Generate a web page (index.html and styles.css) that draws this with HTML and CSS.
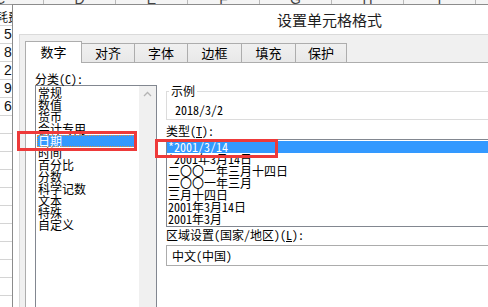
FILE: index.html
```html
<!DOCTYPE html>
<html lang="zh-CN">
<head>
<meta charset="utf-8">
<title>设置单元格格式</title>
<link rel="stylesheet" href="styles.css">
</head>
<body>
<div class="screen">
  <div class="sheet">
    <div class="col-head">
      <div class="ch ch-c">C</div>
      <div class="ch">D</div>
      <div class="ch">E</div>
      <div class="ch">F</div>
      <div class="ch">G</div>
      <div class="ch">H</div>
      <div class="ch">I</div>
    </div>
    <div class="rows">
      <div class="row row-cjk"><span class="clip-text">耗费</span></div>
      <div class="row">5</div>
      <div class="row">8</div>
      <div class="row">2</div>
      <div class="row">9</div>
      <div class="row">6</div>
      <div class="row"></div>
      <div class="row"></div>
      <div class="row"></div>
      <div class="row"></div>
      <div class="row"></div>
      <div class="row"></div>
      <div class="row"></div>
      <div class="row"></div>
      <div class="row"></div>
      <div class="row"></div>
      <div class="row"></div>
    </div>
  </div>

  <div class="dialog">
    <div class="titlebar">设置单元格格式</div>
    <div class="body">
      <div class="tabs">
        <div class="tab active">数字</div>
        <div class="tab w53">对齐</div>
        <div class="tab w53">字体</div>
        <div class="tab w54">边框</div>
        <div class="tab w54">填充</div>
        <div class="tab w51">保护</div>
      </div>
      <div class="panel">
        <div class="col-left">
          <div class="label label-cat">分类(C):</div>
          <div class="listbox cat">
            <ul class="items">
              <li>常规</li>
              <li>数值</li>
              <li>货币</li>
              <li>会计专用</li>
              <li class="sel focus">日期</li>
              <li>时间</li>
              <li>百分比</li>
              <li>分数</li>
              <li>科学记数</li>
              <li>文本</li>
              <li>特殊</li>
              <li>自定义</li>
            </ul>
            <div class="vscroll">
              <svg class="arrow" width="17" height="17" viewBox="0 0 17 17"><polyline points="5,10 8.5,6.5 12,10" fill="none" stroke="#b4b4b4" stroke-width="1.3"/></svg>
              <svg class="arrow" width="17" height="17" viewBox="0 0 17 17"><polyline points="5,7 8.5,10.5 12,7" fill="none" stroke="#b4b4b4" stroke-width="1.3"/></svg>
            </div>
          </div>
        </div>
        <div class="col-right">
          <fieldset class="sample">
            <legend>示例</legend>
            <div class="sample-val">2018/3/2</div>
          </fieldset>
          <div class="label label-type">类型(<u>T</u>):</div>
          <ul class="listbox types">
            <li class="sel">*2001/3/14</li>
            <li>*2001年3月14日</li>
            <li>二〇〇一年三月十四日</li>
            <li>二〇〇一年三月</li>
            <li>三月十四日</li>
            <li>2001年3月14日</li>
            <li>2001年3月</li>
          </ul>
          <div class="label label-locale">区域设置(国家/地区)(<u>L</u>):</div>
          <div class="combo">中文(中国)</div>
        </div>
      </div>
    </div>
  </div>

  <div class="mark mark-cat"></div>
  <div class="mark mark-type"></div>
</div>
</body>
</html>
```

FILE: styles.css
```css
html, body {
  margin: 0;
  padding: 0;
  background: #fff;
}

.screen {
  position: relative;
  width: 488px;
  height: 307px;
  overflow: hidden;
  background: #fff;
  font-family: "Noto Sans Mono CJK SC", "Noto Sans CJK SC", sans-serif;
  color: #000;
}

/* ---------- spreadsheet behind ---------- */
.col-head {
  display: flex;
  height: 4px;
  border-bottom: 1px solid #9a9a9a;
  background: #f4f4f4;
  overflow: hidden;
}

.ch {
  flex: 0 0 72px;
  box-sizing: border-box;
  height: 18px;
  margin-top: -10px;
  border-right: 1px solid #b9b9b9;
  text-align: center;
  font: 14px/18px "Liberation Sans", sans-serif;
  color: #444;
}

.ch-c {
  flex-basis: 44px;
  text-align: left;
  text-indent: -5px;
}

.rows {
  margin-top: 3px;
}

.row {
  box-sizing: border-box;
  width: 12px;
  height: 18px;
  border-bottom: 1px solid #d4d4d4;
  padding-left: 4px;
  overflow: hidden;
  white-space: nowrap;
  font: 14px/17px "Liberation Sans", sans-serif;
  color: #111;
}

.row-cjk {
  padding-left: 0;
  font: 12px/17px "Noto Sans CJK SC", sans-serif;
}

.clip-text {
  display: inline-block;
  margin-left: -4px;
}

/* ---------- dialog ---------- */
.dialog {
  position: absolute;
  left: 12px;
  top: 4px;
  width: 530px;
  height: 330px;
  background: #fff;
  border-top: 1px solid #8c8c8c;
  border-left: 1px solid #8c8c8c;
}

.titlebar {
  height: 29px;
  padding-left: 264px;
  font-size: 15px;
  line-height: 29px;
  color: #1e1e1e;
  font-family: "Noto Sans CJK SC", sans-serif;
}

.body {
  margin-left: 6px;
  height: 300px;
  border-top: 1px solid #dadada;
  border-left: 1px solid #dadada;
  background: #f0f0f0;
  padding: 6px 0 0 5px;
}

.tabs {
  display: flex;
  align-items: flex-end;
  height: 21px;
}

.tab {
  box-sizing: border-box;
  height: 19px;
  border: 1px solid #adadad;
  border-bottom: none;
  border-left: none;
  background: linear-gradient(#f0f0f0, #e8e8e8);
  font-size: 13px;
  line-height: 18px;
  text-align: center;
  color: #000;
}

.tab.active {
  width: 57px;
  height: 22px;
  margin-bottom: -1px;
  border-left: 1px solid #adadad;
  background: #fff;
  line-height: 20px;
  position: relative;
  z-index: 1;
}

.w53 { width: 53px; }
.w54 { width: 54px; }
.w51 { width: 51px; }

.panel {
  display: flex;
  height: 260px;
  background: #fff;
  border-top: 1px solid #adadad;
  border-left: 1px solid #adadad;
  padding-left: 9px;
}

.label {
  font-size: 12px;
  line-height: 12px;
  height: 12px;
  white-space: nowrap;
}

.label u {
  text-decoration: underline;
  text-underline-offset: 1px;
}

.label-cat {
  margin-top: 10px;
  height: 12px;
}

.col-left {
  width: 122px;
  flex: 0 0 122px;
}

.listbox {
  box-sizing: border-box;
  border: 1px solid #828790;
  margin: 0;
  padding: 0;
  list-style: none;
  font-size: 12px;
  line-height: 12px;
}

.cat {
  display: flex;
  height: 240px;
}

.items {
  flex: 1;
  margin: 0;
  padding: 1px 2px 1px 1px;
  list-style: none;
}

.items li,
.types li {
  height: 12px;
  line-height: 12px;
  padding-left: 1px;
  white-space: nowrap;
}

.sel {
  background: #3399ff;
  color: #fff;
}

.focus {
  outline: 1px dotted #e0903a;
  outline-offset: -1px;
}

.vscroll {
  flex: 0 0 17px;
  display: flex;
  flex-direction: column;
  justify-content: space-between;
  background: #f0f0f0;
}

.arrow {
  display: block;
}

.col-right {
  margin-left: 9px;
  width: 340px;
  flex: 0 0 340px;
}

.sample {
  margin: 22px 0 0;
  padding: 7px 8px 3px;
  border: 1px solid #dcdcdc;
  min-width: 0;
}

.sample legend {
  padding: 0 2px;
  margin-left: -6px;
  font-size: 12px;
  line-height: 12px;
  height: 12px;
}

.sample-val {
  font-size: 12px;
  line-height: 12px;
  height: 12px;
}

.label-type {
  margin-top: 5px;
}

.types {
  margin-top: 2px;
  padding: 1px 0;
}

.label-locale {
  margin-top: 2px;
}

.combo {
  box-sizing: border-box;
  margin-top: 4px;
  height: 21px;
  border: 1px solid #acacac;
  padding-left: 5px;
  font-size: 12px;
  line-height: 19px;
}

/* ---------- red annotation boxes ---------- */
.mark {
  position: absolute;
  box-sizing: border-box;
  border: 3px solid #ee3a3a;
}

.mark-cat {
  left: 17px;
  top: 131px;
  width: 120px;
  height: 20px;
}

.mark-type {
  left: 155px;
  top: 139px;
  width: 123px;
  height: 19px;
}
```
